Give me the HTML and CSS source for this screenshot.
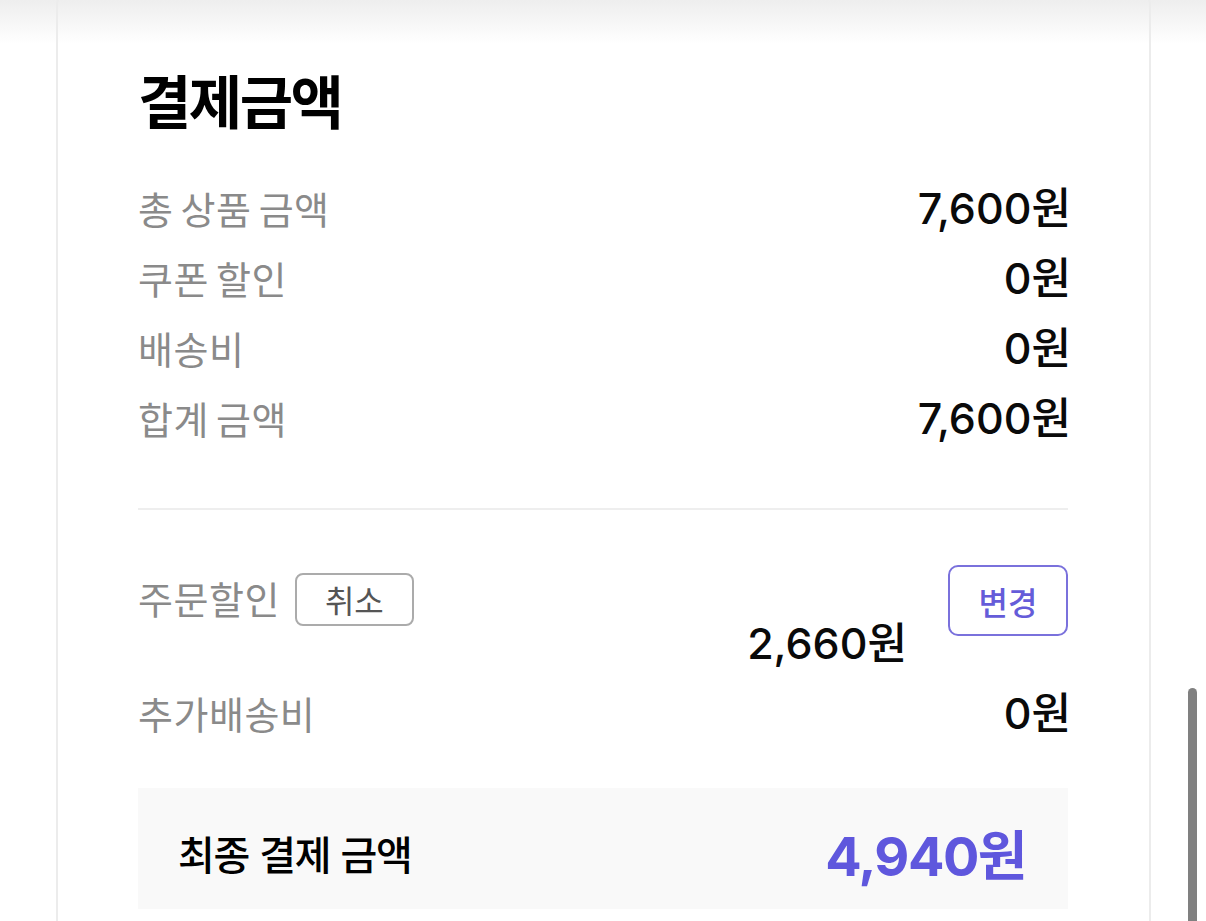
FILE: index.html
```html
<!DOCTYPE html>
<html lang="ko">
<head>
<meta charset="utf-8">
<link rel="stylesheet" href="styles.css">
</head>
<body>
<div class="top-shade"></div>
<main class="card">
  <h1 class="title">결제금액</h1>
  <div class="rows">
    <div class="row"><span class="label">총 상품 금액</span><span class="value">7,600원</span></div>
    <div class="row"><span class="label">쿠폰 할인</span><span class="value">0원</span></div>
    <div class="row"><span class="label">배송비</span><span class="value">0원</span></div>
    <div class="row"><span class="label">합계 금액</span><span class="value">7,600원</span></div>
  </div>
  <hr class="divider">
  <div class="order-row">
    <div class="order-left">
      <span class="label">주문할인</span>
      <button class="btn-cancel">취소</button>
    </div>
    <div class="order-right">
      <span class="value amount">2,660원</span>
      <button class="btn-change">변경</button>
    </div>
  </div>
  <div class="row"><span class="label">추가배송비</span><span class="value">0원</span></div>
  <div class="final">
    <span class="final-label">최종 결제 금액</span>
    <span class="final-value">4,940원</span>
  </div>
</main>
<div class="scrollbar"></div>
</body>
</html>
```

FILE: styles.css
```css
html, body {
  margin: 0;
  padding: 0;
  background: #ffffff;
  height: 921px;
  overflow: hidden;
}
body {
  font-family: "Noto Sans CJK KR", "Noto Sans", sans-serif;
  position: relative;
}
.top-shade {
  position: absolute;
  left: 0;
  top: 0;
  width: 100%;
  height: 44px;
  background: linear-gradient(to bottom, rgba(236,236,236,0.9), rgba(255,255,255,0));
  pointer-events: none;
  z-index: 2;
}
.card {
  margin: -16px 0 0 56px;
  width: 1095px;
  box-sizing: border-box;
  min-height: 1000px;
  border: 2px solid #ececec;
  border-radius: 22px;
  padding: 78px 81px 0 80px;
  background: #fff;
}
.title {
  margin: 0;
  font-size: 58px;
  line-height: 70px;
  font-weight: 700;
  letter-spacing: -2.5px;
  color: #000;
}
.rows {
  margin-top: 39px;
}
.row {
  display: flex;
  justify-content: space-between;
  align-items: center;
  height: 70px;
}
.label {
  font-size: 38px;
  letter-spacing: 0.5px;
  word-spacing: -4px;
  color: #8a8a8a;
  line-height: 70px;
}
.value {
  font-family: "Inter", "Noto Sans CJK KR", sans-serif;
  font-size: 43px;
  font-weight: 500;
  color: #0a0a0a;
  line-height: 70px;
  letter-spacing: 0;
  margin-right: -3px;
}
.divider {
  margin: 55px 0 0 0;
  border: 0;
  height: 2px;
  background: #eeeeee;
}
.order-row {
  margin-top: 53px;
  display: flex;
  justify-content: space-between;
  align-items: flex-start;
}
.order-left {
  display: flex;
  align-items: center;
  gap: 15px;
  height: 70px;
}
.btn-cancel {
  font-family: "Noto Sans CJK KR", sans-serif;
  width: 119px;
  height: 53px;
  box-sizing: border-box;
  border: 2px solid #ababab;
  border-radius: 8px;
  background: #fff;
  color: #555;
  font-size: 32px;
  letter-spacing: 0;
  padding: 0;
  margin-top: 2px;
}
.order-right {
  display: flex;
  align-items: flex-start;
  gap: 44px;
}
.amount {
  margin-top: 45px;
}
.btn-change {
  font-family: "Noto Sans CJK KR", sans-serif;
  width: 120px;
  height: 71px;
  box-sizing: border-box;
  border: 2px solid #7a71dc;
  border-radius: 10px;
  background: #fff;
  color: #655cd9;
  font-size: 32px;
  font-weight: 500;
  letter-spacing: 0;
  padding: 0;
  margin-top: 2px;
}
.final {
  margin-top: 40px;
  height: 121px;
  background: #f9f9f9;
  display: flex;
  justify-content: space-between;
  align-items: center;
  padding: 8px 42px 0 40px;
  box-sizing: border-box;
}
.final-label {
  font-size: 40px;
  font-weight: 500;
  letter-spacing: -1.2px;
  color: #000;
}
.final-value {
  font-family: "Inter", "Noto Sans CJK KR", sans-serif;
  font-size: 54px;
  font-weight: 700;
  letter-spacing: -1.5px;
  color: #5f57dd;
}
.scrollbar {
  position: absolute;
  left: 1188px;
  top: 688px;
  width: 9px;
  height: 260px;
  border-radius: 5px;
  background: #808080;
}
```
